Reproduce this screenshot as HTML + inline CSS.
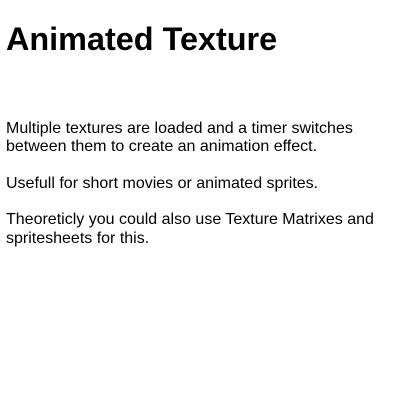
<!DOCTYPE html>
<html><head><style>
body{margin:6px;font-family:"Liberation Sans",sans-serif;background:#fff;color:#000;}
h1{font-size:32.4px;margin:21px 0 0 0;line-height:37px;}
p{font-size:16px;line-height:18.3px;margin:0 0 18.3px 0;}
.c{margin-top:62px;}
</style></head><body>
<h1>Animated Texture</h1>
<div class="c">
<p>Multiple textures are loaded and a timer switches between them to create an animation effect.</p>
<p>Usefull for short movies or animated sprites.</p>
<p>Theoreticly you could also use Texture Matrixes and spritesheets for this.</p>
</div>
</body></html>
